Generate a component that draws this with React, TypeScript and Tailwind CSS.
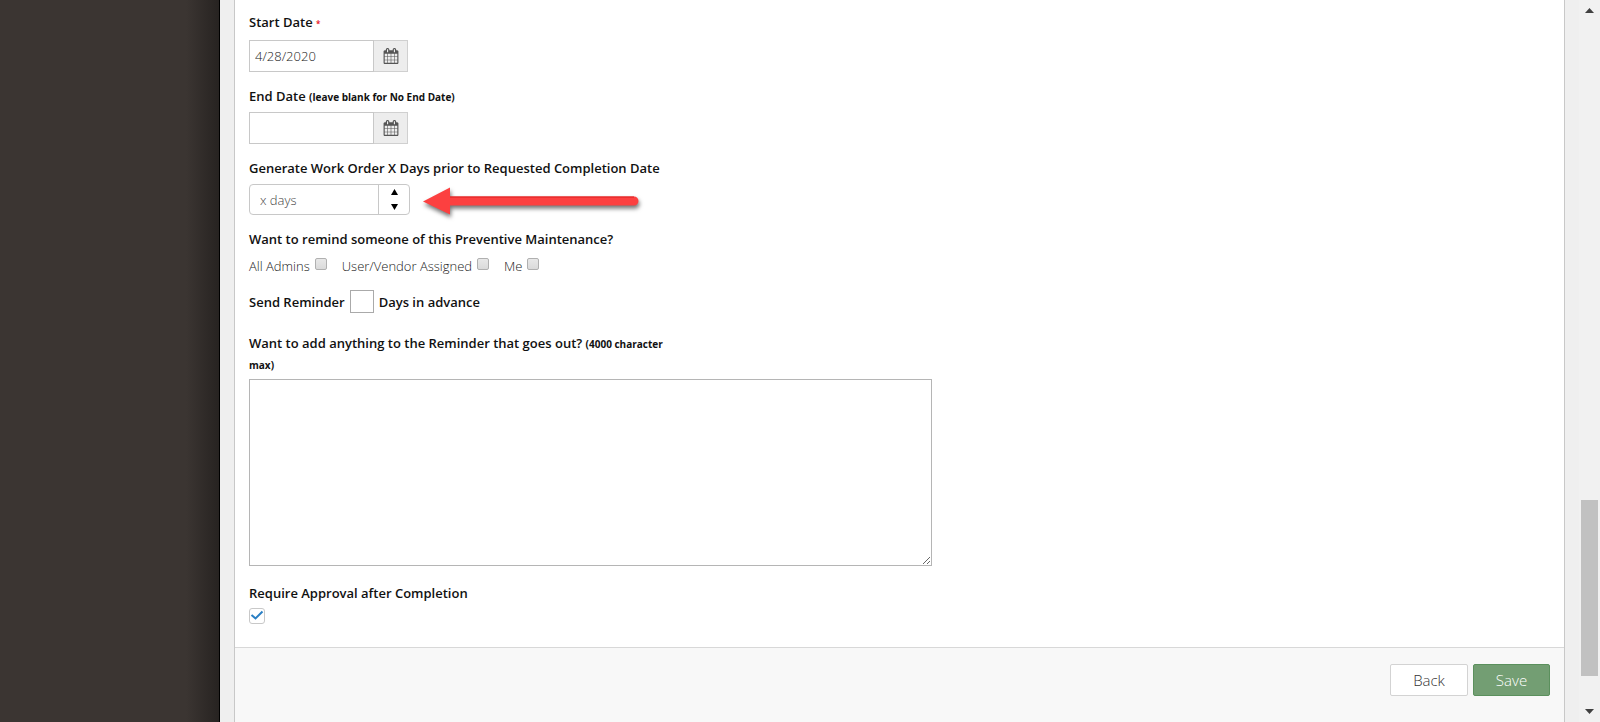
import { useState } from "react";

interface DateFieldProps {
  id: string;
  value: string;
  onChange: (value: string) => void;
}

function CalendarIcon() {
  return (
    <svg viewBox="0 0 1792 1792" fill="currentColor" className="h-4 w-4">
      <path d="M192 1664h288v-288h-288v288zm352 0h320v-288h-320v288zm-352-352h288v-320h-288v320zm352 0h320v-320h-320v320zm-352-384h288v-288h-288v288zm736 736h320v-288h-320v288zm-384-736h320v-288h-320v288zm768 736h288v-288h-288v288zm-384-352h320v-320h-320v320zm-352-864v-288q0-13-9.5-22.5t-22.5-9.5h-64q-13 0-22.5 9.5t-9.5 22.5v288q0 13 9.5 22.5t22.5 9.5h64q13 0 22.5-9.5t9.5-22.5zm736 864h288v-320h-288v320zm-384-384h320v-288h-320v288zm384 0h288v-288h-288v288zm32-480v-288q0-13-9.5-22.5t-22.5-9.5h-64q-13 0-22.5 9.5t-9.5 22.5v288q0 13 9.5 22.5t22.5 9.5h64q13 0 22.5-9.5t9.5-22.5zm384-64v1280q0 52-38 90t-90 38h-1408q-52 0-90-38t-38-90v-1280q0-52 38-90t90-38h128v-96q0-66 47-113t113-47h64q66 0 113 47t47 113v96h384v-96q0-66 47-113t113-47h64q66 0 113 47t47 113v96h128q52 0 90 38t38 90z" />
    </svg>
  );
}

function DateField({ id, value, onChange }: DateFieldProps) {
  return (
    <div className="flex items-start">
      <input
        id={id}
        type="text"
        value={value}
        onChange={(e) => onChange(e.target.value)}
        className="h-8 w-[125px] border border-[#c8c8c8] bg-white px-[5px] text-[13px] font-light text-[#222] outline-none"
      />
      <button
        type="button"
        aria-label="Open calendar"
        className="flex h-8 w-[34px] items-center justify-center border border-l-0 border-[#d0d0d0] bg-[#ededed] text-[#555]"
      >
        <CalendarIcon />
      </button>
    </div>
  );
}

function ReminderOption({ id, label }: { id: string; label: string }) {
  return (
    <div className="flex items-center gap-[5px]">
      <label htmlFor={id}>{label}</label>
      <input
        id={id}
        type="checkbox"
        className="mb-1 h-3 w-3 appearance-none rounded-xs border border-[#b0b0b0] bg-linear-to-b from-[#e8e8e8] to-[#dadada] checked:bg-[#2a7fc4]"
      />
    </div>
  );
}

function Arrow() {
  return (
    <svg width="224" height="40" viewBox="0 0 224 40" className="drop-shadow-[1px_3px_2px_rgba(0,0,0,0.55)]">
      <path d="M1 21.500L28 7.500V16.500H212a4.500 4.500 0 0 1 0 9H28V34.500Z" fill="#fc4040" />
      <path d="M28 17H212" stroke="#dc1f1f" strokeWidth="1" />
    </svg>
  );
}

export default function App() {
  const [startDate, setStartDate] = useState("4/28/2020");
  const [endDate, setEndDate] = useState("");
  const [days, setDays] = useState("");
  const [approval, setApproval] = useState(true);

  const step = (n: number) => setDays(String(Math.max(0, Number(days) + n)));

  return (
    <div className="flex min-h-screen bg-[#efefef] font-['Open_Sans',sans-serif] text-[13px] leading-5 text-[#111]">
      <aside className="w-[220px] shrink-0 border-r border-black bg-[linear-gradient(to_right,#3b3532_85%,#272321)]" />

      <form
        className="mx-[14px] flex min-w-0 flex-1 flex-col border-x border-[#c8c8c8] bg-white"
        onSubmit={(e) => e.preventDefault()}
      >
        <div className="flex flex-col items-start px-[14px] pt-3 pb-[23px] font-semibold">
          <label htmlFor="start" className="mb-2">
            Start Date <span className="text-[8px] leading-none text-red-600">*</span>
          </label>
          <DateField id="start" value={startDate} onChange={setStartDate} />

          <label htmlFor="end" className="mt-[14px] mb-[6px]">
            End Date <span className="text-[10px] leading-none font-bold">(leave blank for No End Date)</span>
          </label>
          <DateField id="end" value={endDate} onChange={setEndDate} />

          <label htmlFor="days" className="mt-[14px] mb-[6px]">
            Generate Work Order X Days prior to Requested Completion Date
          </label>
          <div className="flex h-[31px] items-center gap-3">
            <div className="flex h-full w-[161px] rounded-sm border border-[#c8c8c8]">
              <input
                id="days"
                type="text"
                placeholder="x days"
                value={days}
                onChange={(e) => setDays(e.target.value)}
                className="w-0 flex-1 px-[10px] text-[13px] font-light outline-none placeholder:text-[#444]"
              />
              <div className="flex w-[31px] flex-col border-l border-[#c8c8c8]">
                <button type="button" aria-label="Increase" className="flex flex-1 items-center justify-center" onClick={() => step(1)}>
                  <svg width="7" height="6" viewBox="0 0 7 6"><path d="M3.500 0L7 6H0Z" /></svg>
                </button>
                <button type="button" aria-label="Decrease" className="flex flex-1 items-center justify-center" onClick={() => step(-1)}>
                  <svg width="7" height="6" viewBox="0 0 7 6"><path d="M0 0H7L3.500 6Z" /></svg>
                </button>
              </div>
            </div>
            <Arrow />
          </div>

          <p className="mt-[14px]">Want to remind someone of this Preventive Maintenance?</p>
          <div className="mt-[7px] flex gap-[15px] font-light text-[#222]">
            <ReminderOption id="admins" label="All Admins" />
            <ReminderOption id="vendor" label="User/Vendor Assigned" />
            <ReminderOption id="me" label="Me" />
          </div>

          <div className="mt-[14px] flex items-center gap-[5px]">
            <label htmlFor="advance">Send Reminder</label>
            <input id="advance" type="text" className="h-[23px] w-6 border border-[#aaa] px-1 text-[13px] outline-none" />
            <span>Days in advance</span>
          </div>

          <label htmlFor="message" className="mt-5 mb-1 w-[432px] max-w-full leading-[21px]">
            Want to add anything to the Reminder that goes out?{" "}
            <span className="text-[10px] leading-none font-bold">(4000 character max)</span>
          </label>
          <textarea
            id="message"
            maxLength={4000}
            className="block h-[187px] w-[683px] max-w-full border border-[#b5b5b5] p-1 font-light outline-none"
          />

          <label htmlFor="approval" className="mt-[17px] mb-[5px]">
            Require Approval after Completion
          </label>
          <span className="relative flex">
            <input
              id="approval"
              type="checkbox"
              checked={approval}
              onChange={(e) => setApproval(e.target.checked)}
              className="h-4 w-4 appearance-none rounded-[3px] border border-[#c8c8c8] bg-white"
            />
            {approval && (
              <svg viewBox="0 0 16 16" fill="none" stroke="#2a7fc4" strokeWidth="2" className="pointer-events-none absolute inset-0 h-4 w-4">
                <path d="M2.500 7L6.500 10.500L13.500 3.500" />
              </svg>
            )}
          </span>
        </div>

        <div className="flex flex-1 items-start justify-end gap-[5px] border-t border-[#d8d8d8] bg-[#f8f8f8] px-[14px] pt-4 pb-6 text-[15px] font-light">
          <button type="button" className="h-8 w-[78px] rounded-xs border border-[#d3d3d3] bg-white text-[#333]">
            Back
          </button>
          <button type="submit" className="h-8 w-[77px] rounded-xs border border-[#5b905d] bg-[#739e73] text-white">
            Save
          </button>
        </div>
      </form>

      {/* scroll track */}
      <div className="flex w-[21px] shrink-0 flex-col items-center justify-between bg-[#f1f1f1] py-2">
        <svg width="9" height="5" viewBox="0 0 9 5" fill="#404040"><path d="M4.500 0L9 5H0Z" /></svg>
        <div className="flex w-full flex-1 flex-col justify-end pb-[33px]">
          <div className="mx-auto h-[176px] w-[17px] bg-[#c1c1c1]" />
        </div>
        <svg width="9" height="5" viewBox="0 0 9 5" fill="#404040"><path d="M0 0H9L4.500 5Z" /></svg>
      </div>
    </div>
  );
}
